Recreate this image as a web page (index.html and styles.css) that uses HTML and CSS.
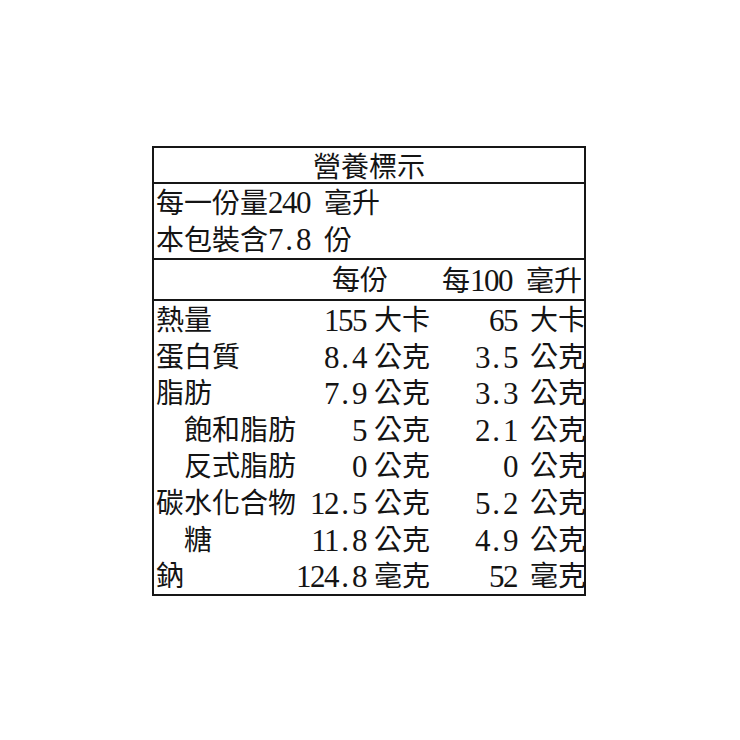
FILE: index.html
```html
<!DOCTYPE html>
<html lang="zh-Hant">
<head>
<meta charset="utf-8">
<title>營養標示</title>
<link rel="stylesheet" href="styles.css">
</head>
<body>
<div class="label">
  <div class="title">營養標示</div>
  <div class="serving">
    <div class="line">每一份量<span class="num">240</span><span class="sp"></span>毫升</div>
    <div class="line">本包裝含<span class="num">7<span class="d">.</span>8</span><span class="sp"></span>份</div>
  </div>
  <div class="grid head">
    <div class="h1">每份</div>
    <div class="h2">每<span class="num">100</span><span class="sp"></span>毫升</div>
  </div>
  <div class="grid rows">
    <div class="name">熱量</div><div class="n1">155</div><div class="u1">大卡</div><div class="n2">65</div><div class="u2">大卡</div>
    <div class="name">蛋白質</div><div class="n1">8<span class="d">.</span>4</div><div class="u1">公克</div><div class="n2">3<span class="d">.</span>5</div><div class="u2">公克</div>
    <div class="name">脂肪</div><div class="n1">7<span class="d">.</span>9</div><div class="u1">公克</div><div class="n2">3<span class="d">.</span>3</div><div class="u2">公克</div>
    <div class="name sub">飽和脂肪</div><div class="n1">5</div><div class="u1">公克</div><div class="n2">2<span class="d">.</span>1</div><div class="u2">公克</div>
    <div class="name sub">反式脂肪</div><div class="n1">0</div><div class="u1">公克</div><div class="n2">0</div><div class="u2">公克</div>
    <div class="name">碳水化合物</div><div class="n1">12<span class="d">.</span>5</div><div class="u1">公克</div><div class="n2">5<span class="d">.</span>2</div><div class="u2">公克</div>
    <div class="name sub">糖</div><div class="n1">11<span class="d">.</span>8</div><div class="u1">公克</div><div class="n2">4<span class="d">.</span>9</div><div class="u2">公克</div>
    <div class="name">鈉</div><div class="n1">124<span class="d">.</span>8</div><div class="u1">毫克</div><div class="n2">52</div><div class="u2">毫克</div>
  </div>
</div>
</body>
</html>
```

FILE: styles.css
```css
html, body {
  margin: 0;
  padding: 0;
  background: #ffffff;
}

body {
  font-family: "Liberation Serif", "Noto Sans CJK TC", serif;
  font-size: 28px;
  color: #141414;
}

.label {
  box-sizing: border-box;
  width: 434px;
  margin: 146px 0 0 152px;
  border: 2px solid #161616;
}

.title {
  box-sizing: border-box;
  height: 36px;
  line-height: 35px;
  padding-top: 2px;
  text-align: center;
  border-bottom: 2px solid #161616;
}

.serving {
  padding-left: 2px;
  border-bottom: 2px solid #161616;
}

.serving .line {
  height: 37px;
  line-height: 38px;
  white-space: nowrap;
}

.num, .n1, .n2 {
  font-size: 31px;
  letter-spacing: -1.5px;
}

.sp {
  display: inline-block;
  width: 14px;
}

.d {
  display: inline-block;
  width: 14px;
  letter-spacing: 0;
  text-align: center;
}

.grid {
  display: grid;
  grid-template-columns: 142px 1fr 56px 100px 56px;
  white-space: nowrap;
}

.head {
  height: 39px;
  line-height: 41px;
  border-bottom: 2px solid #161616;
}

.head .h1 {
  grid-column: 2 / 4;
  text-align: right;
  padding-right: 40px;
}

.head .h2 {
  grid-column: 4 / 6;
  text-align: right;
  padding-right: 2px;
}

.rows {
  grid-auto-rows: 36.6px;
  line-height: 39px;
}

.name {
  padding-left: 2px;
}

.name.sub {
  padding-left: 30px;
}

.n1 {
  text-align: right;
  padding-right: 8px;
}

.n2 {
  text-align: right;
  padding-right: 13px;
}

.u1, .u2 {
  text-align: left;
}
```
